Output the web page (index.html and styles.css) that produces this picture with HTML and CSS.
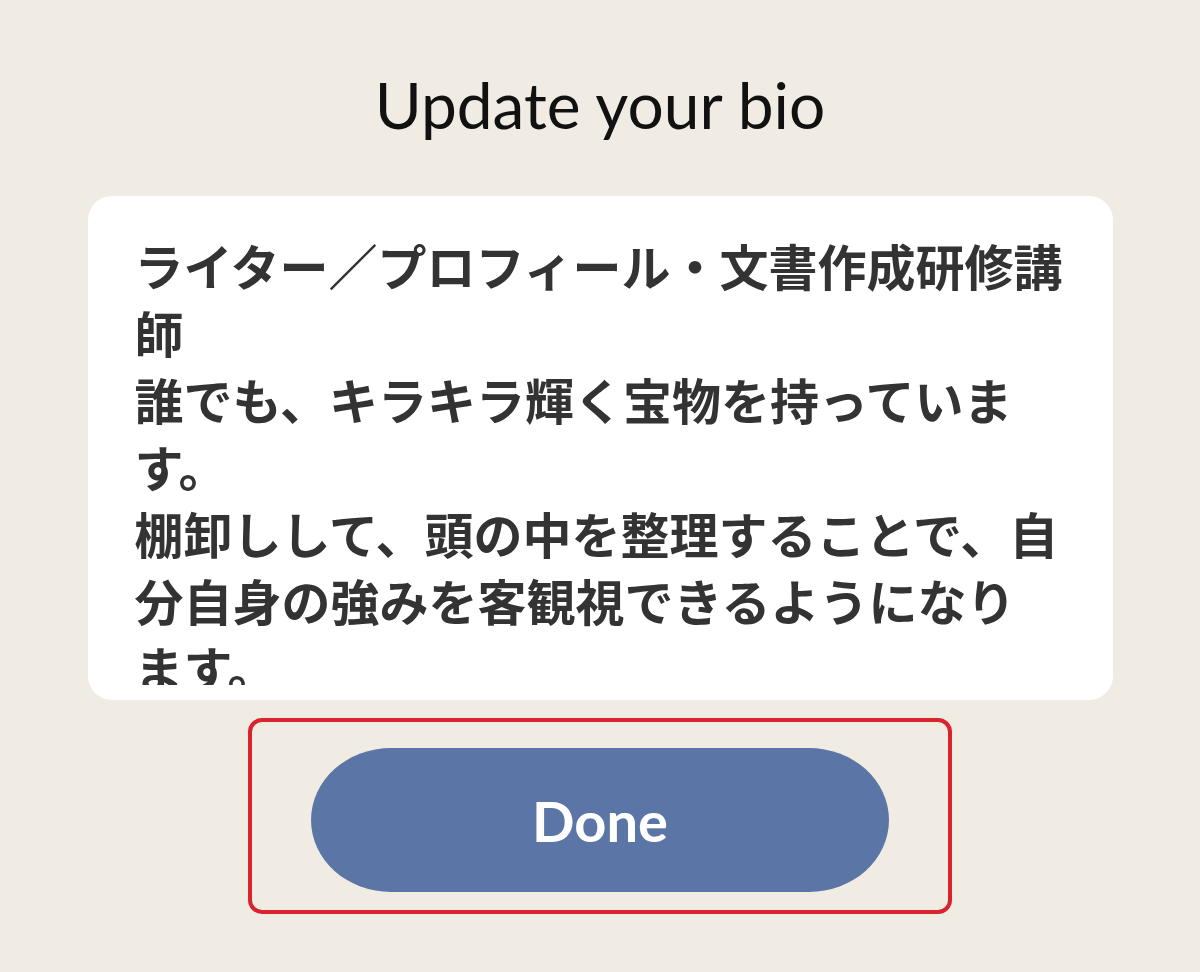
FILE: index.html
```html
<!DOCTYPE html>
<html lang="ja">
<head>
    <meta charset="UTF-8">
    <meta name="viewport" content="width=device-width, initial-scale=1.0">
    <title>Update your bio</title>
    <link rel="stylesheet" href="styles.css">
</head>
<body>
    <div class="screen">
        <h1 class="title">Update your bio</h1>
        <div class="bio-card">
            <div class="bio-text">ライター／プロフィール・文書作成研修講師<br>誰でも、キラキラ輝く宝物を持っています。<br>棚卸しして、頭の中を整理することで、自分自身の強みを客観視できるようになり<span class="keep">ます。</span></div>
        </div>
        <div class="highlight">
            <button class="done-btn" type="button">Done</button>
        </div>
    </div>
</body>
</html>
```

FILE: styles.css
```css
body {
    margin: 0;
    padding: 0;
    background-color: #f0ece4;
    font-family: 'Lato', 'Noto Sans', sans-serif;
}

.screen {
    display: flex;
    flex-direction: column;
    align-items: center;
    height: 972px;
    overflow: hidden;
}

.title {
    margin: 68px 0 54px;
    font-size: 64px;
    line-height: 74px;
    font-weight: 400;
    color: #111;
}

.bio-card {
    box-sizing: border-box;
    width: 1025px;
    height: 504px;
    padding: 35px 40px 15px 47px;
    background-color: #fff;
    border-radius: 24px;
}

.bio-text {
    height: 454px;
    overflow: hidden;
    font-family: 'Noto Sans CJK JP', sans-serif;
    font-size: 49px;
    line-height: 67px;
    font-weight: 700;
    color: #333;
}

.keep {
    white-space: nowrap;
}

.highlight {
    box-sizing: border-box;
    width: 704px;
    margin-top: 18px;
    padding: 26px 59px 18px;
    border: 4px solid #d9232e;
    border-radius: 14px;
}

.done-btn {
    display: block;
    width: 100%;
    height: 144px;
    border: none;
    border-radius: 80px / 72px;
    background-color: #5b76a6;
    color: #fff;
    font-family: 'Lato', 'Noto Sans', sans-serif;
    font-size: 56px;
    font-weight: 700;
    cursor: pointer;
}
```
